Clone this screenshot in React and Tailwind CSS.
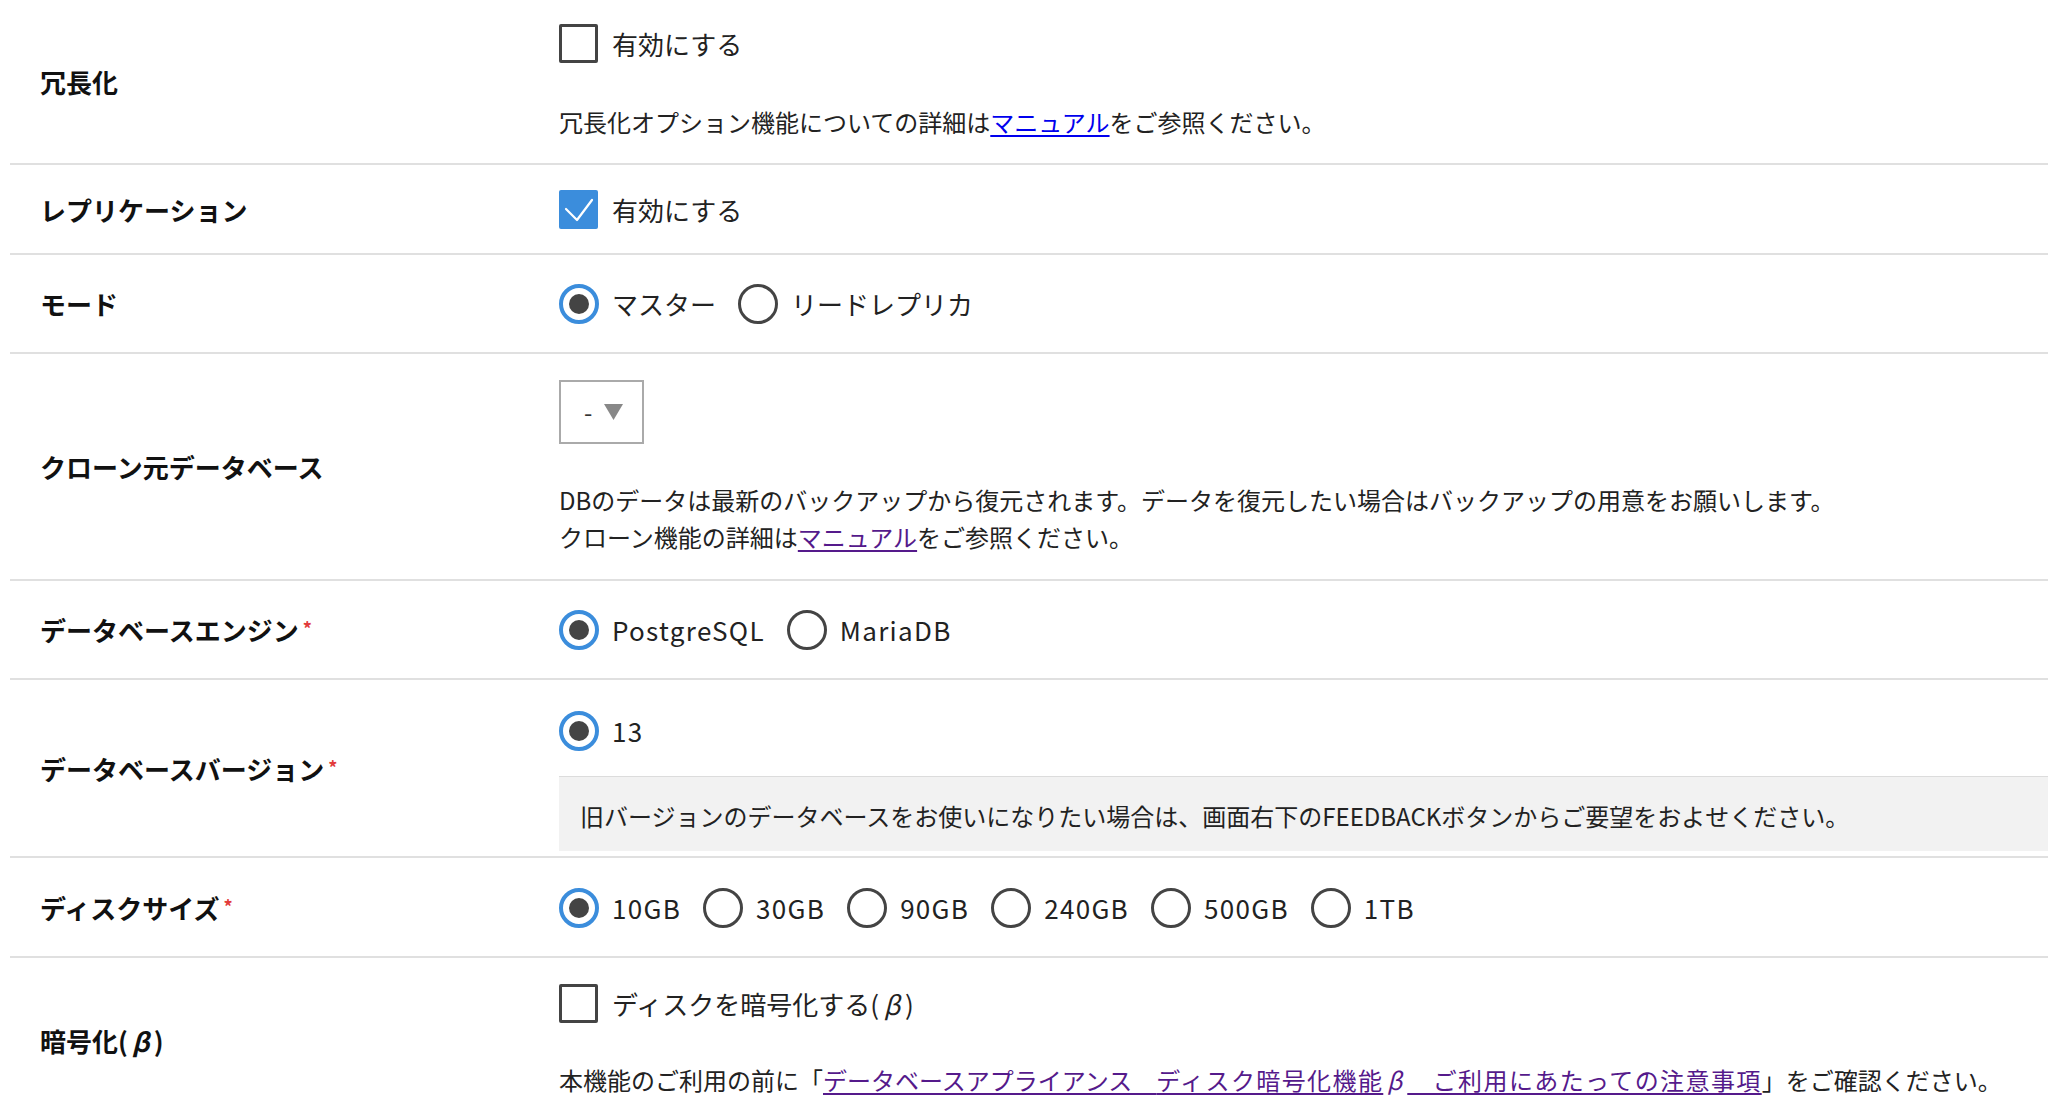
import React from 'react';

const BLUE = 'border-[#3b8ddc]';

// Hiragino draws β as a full-width glyph, Noto does not: give it a 1em box
function Beta() {
  return <span className="inline-block w-[1em] text-center italic">β</span>;
}

function Checkbox({ checked, label }) {
  return (
    <label className="flex items-center h-[39px]">
      {checked ? (
        <span className="w-[39px] h-[39px] shrink-0 bg-[#3b8ddc] rounded-[2px] flex items-center justify-center">
          <svg width="39" height="39" viewBox="0 0 39 39" fill="none">
            <polyline points="7,19 18,30 33,10" stroke="#fff" strokeWidth="2.2" strokeLinecap="round" strokeLinejoin="round" />
          </svg>
        </span>
      ) : (
        <span className="w-[39px] h-[39px] shrink-0 border-[3px] border-[#444] rounded-[2px] bg-white" />
      )}
      <span className="ml-[14px] text-[26px] text-[#222] leading-none">{label}</span>
    </label>
  );
}

function Radio({ checked, label, latin }) {
  return (
    <label className="flex items-center h-[40px]">
      {checked ? (
        <span className={`w-[40px] h-[40px] shrink-0 rounded-full border-[4px] ${BLUE} bg-white flex items-center justify-center`}>
          <span className="w-[20px] h-[20px] rounded-full bg-[#444]" />
        </span>
      ) : (
        <span className="w-[40px] h-[40px] shrink-0 rounded-full border-[3.5px] border-[#444] bg-white" />
      )}
      <span className={`ml-[13px] text-[26px] text-[#222] leading-none ${latin ? 'tracking-[1.3px]' : ''}`}>{label}</span>
    </label>
  );
}

function RadioGroup({ options, selected, latin }) {
  return (
    <div className="flex items-center gap-[22px]">
      {options.map((o) => (
        <Radio key={o} label={o} latin={latin} checked={o === selected} />
      ))}
    </div>
  );
}

function Row({ label, required, children, className = '' }) {
  return (
    <div className="flex items-center border-b-2 border-[#e0e0e0]">
      <div className="w-[549px] shrink-0 pl-[30px] text-[26px] font-bold text-[#111]">
        {label}
        {required && <span className="ml-[4px] text-[18px] text-[#e23b3b] align-[5px]">*</span>}
      </div>
      <div className={`flex-1 min-w-0 ${className}`}>{children}</div>
    </div>
  );
}

export default function App() {
  return (
    <div className="min-h-screen bg-white pl-[10px] font-['Noto_Sans_CJK_JP',sans-serif] text-[#222] overflow-hidden">
      <Row label="冗長化" className="pt-[24px] pb-[23px]">
        <Checkbox label="有効にする" />
        <p className="mt-[40px] text-[24px] leading-[37px]">
          冗長化オプション機能についての詳細は
          <a href="#" className="text-[#0000ee] underline underline-offset-[3px]">マニュアル</a>
          をご参照ください。
        </p>
      </Row>

      <Row label="レプリケーション" className="pt-[25px] pb-[24px]">
        <Checkbox checked label="有効にする" />
      </Row>

      <Row label="モード" className="pt-[29px] pb-[28px]">
        <RadioGroup options={['マスター', 'リードレプリカ']} selected="マスター" />
      </Row>

      <Row label="クローン元データベース" className="pt-[26px] pb-[24px]">
        <div className="w-[85px] h-[64px] border-2 border-[#aaa] bg-white flex items-center pl-[23px] gap-[12px]">
          <span className="text-[24px] text-[#333] leading-none">-</span>
          <svg width="19" height="16" viewBox="0 0 19 16">
            <polygon points="0,0 19,0 9.5,16" fill="#888" />
          </svg>
        </div>
        <div className="mt-[37px] text-[24px] leading-[37px]">
          <p>DBのデータは最新のバックアップから復元されます。データを復元したい場合はバックアップの用意をお願いします。</p>
          <p>
            クローン機能の詳細は
            <a href="#" className="text-[#551a8b] underline underline-offset-[3px]">マニュアル</a>
            をご参照ください。
          </p>
        </div>
      </Row>

      <Row label="データベースエンジン" required className="pt-[29px] pb-[28px]">
        <RadioGroup latin options={['PostgreSQL', 'MariaDB']} selected="PostgreSQL" />
      </Row>

      <Row label="データベースバージョン" required className="pt-[31px] pb-[5px]">
        <RadioGroup latin options={['13']} selected="13" />
        <div className="mt-[25px] h-[75px] bg-[#f2f2f2] border-t border-[#dcdcdc] flex items-center pl-[21px] pt-[4px] text-[24px] whitespace-nowrap">
          旧バージョンのデータベースをお使いになりたい場合は、画面右下のFEEDBACKボタンからご要望をおよせください。
        </div>
      </Row>

      <Row label="ディスクサイズ" required className="pt-[30px] pb-[28px]">
        <RadioGroup latin options={['10GB', '30GB', '90GB', '240GB', '500GB', '1TB']} selected="10GB" />
      </Row>

      <Row label={<>暗号化(<Beta />)</>} className="pt-[26px] pb-[24px]">
        <Checkbox label={<>ディスクを暗号化する(<Beta />)</>} />
        <p className="mt-[38px] text-[24px] leading-[37px] whitespace-nowrap">
          本機能のご利用の前に「
          <a href="#" className="text-[#551a8b] underline underline-offset-[3px]">
            データベースアプライアンス　<span className="tracking-[1.4px]">ディスク暗号化機能<Beta />　ご利用にあたっての注意事項</span>
          </a>
          」をご確認ください。
        </p>
      </Row>
    </div>
  );
}
